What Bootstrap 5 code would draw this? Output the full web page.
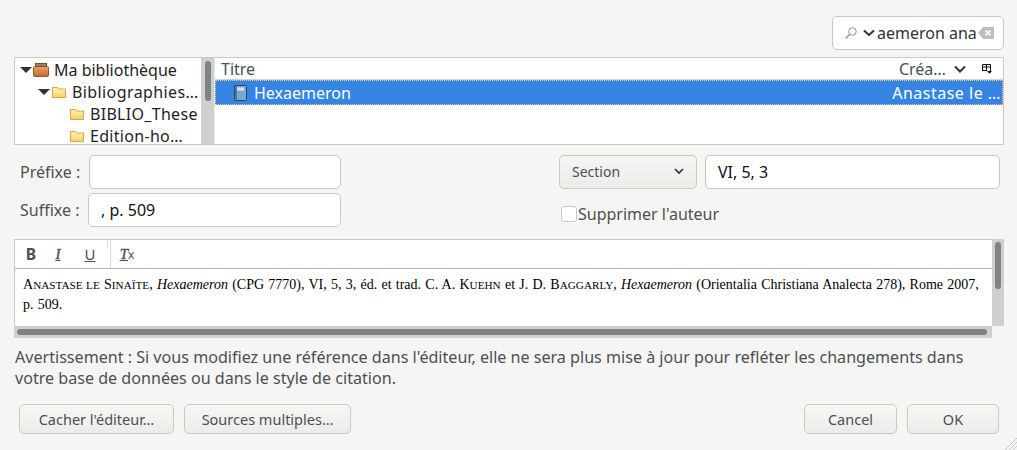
<!DOCTYPE html>
<html lang="fr">
<head>
    <meta charset="UTF-8">
    <meta name="viewport" content="width=device-width, initial-scale=1.0">
    <title>Citation</title>
    <link href="https://cdn.jsdelivr.net/npm/bootstrap@5.3.0/dist/css/bootstrap.min.css" rel="stylesheet">
    <style>
        html, body {
            height: 450px;
            overflow: hidden;
        }
        body {
            background-color: #f6f5f4;
            color: #2e3436;
            font-family: "Noto Sans", sans-serif;
            font-size: 16px;
            position: relative;
        }
        .dlg {
            width: 1017px;
            height: 450px;
            padding: 16px 13px 0 14px;
        }
        .gtk-entry {
            height: 34px;
            background: #fff;
            border: 1px solid #cdc7c2;
            border-radius: 5px;
            padding: 0 12px;
            color: #111;
            line-height: 32px;
            outline: none;
            font: inherit;
            min-width: 0;
        }
        .search-box {
            width: 172px;
            margin-left: auto;
            padding: 0 5px 0 12px;
            color: #2e3436;
        }
        .search-chev {
            margin-left: 6px;
        }
        .search-txt {
            width: 99px;
            flex: none;
            overflow: hidden;
            white-space: nowrap;
            margin-left: 2px;
        }
        .search-clear {
            flex: none;
            margin-left: 2px;
        }
        .panes {
            height: 88px;
            margin-top: 7px;
            border: 1px solid #cdc7c2;
            background: #fff;
            overflow: hidden;
        }
        .tree-pane {
            width: 186px;
            flex: none;
            padding-top: 1px;
        }
        .tree-row {
            height: 22px;
            line-height: 22px;
            white-space: nowrap;
            color: #1f2325;
            gap: 5px;
        }
        .lvl0 { padding-left: 5px; }
        .lvl1 { padding-left: 23px; gap: 6px; letter-spacing: 0.4px; }
        .lvl2 { padding-left: 55px; gap: 6px; letter-spacing: 0.3px; }
        .arrow {
            width: 0;
            height: 0;
            border: 6px solid transparent;
            border-top: 6px solid #2e3436;
            border-bottom: 0;
            display: inline-block;
            margin-right: -4px;
        }
        .v-track {
            width: 14px;
            flex: none;
            background: #cfcfcf;
            border-right: 1px solid #e8e8e8;
            position: relative;
        }
        .v-thumb {
            position: absolute;
            background: #7e8384;
            border-radius: 3px;
            left: 4px;
            top: 3px;
            width: 6px;
            height: 40px;
        }
        .list-pane {
            min-width: 0;
            flex: 1;
        }
        .list-head {
            height: 22px;
            border-bottom: 1px solid #d4d0cc;
            padding: 1px 11px 0 6px;
            line-height: 21px;
            color: #4a5053;
        }
        .list-sel {
            height: 25px;
            background: #3584e4;
            color: #fff;
            line-height: 25px;
            outline: 1px dotted #f0d878;
            outline-offset: -1px;
            padding: 1px 2px 0 19px;
        }
        .sel-name {
            margin-left: 7px;
        }
        .sel-author {
            margin-left: auto;
            letter-spacing: 0.5px;
        }
        .field-lbl {
            color: #4a5053;
            width: 74px;
            flex: none;
            padding-left: 6px;
            white-space: nowrap;
        }
        .lbl-wide {
            width: 75px;
        }
        .fields {
            margin-top: 10px;
        }
        .col-left {
            width: 327px;
            flex: none;
        }
        .col-right {
            margin-left: 218px;
            width: 441px;
            flex: none;
        }
        .sel-btn {
            width: 138px;
            height: 34px;
            flex: none;
            background: linear-gradient(#f6f5f4, #edebe9);
            border: 1px solid #cdc7c2;
            border-radius: 5px;
            font-size: 14px;
            color: #4a5053;
            padding: 0 12px 2px;
        }
        .val-input {
            width: 295px;
        }
        .check-row {
            margin-top: 14px;
            height: 22px;
            color: #4a5053;
        }
        .check-mark {
            width: 16px;
            height: 16px;
            border: 1px solid #cdc7c2;
            border-radius: 3px;
            background: #fff;
            flex: none;
            margin: 0 1px 0 2px;
        }
        .editor-wrap {
            margin-top: 12px;
            height: 99px;
            position: relative;
        }
        .editor-main {
            height: 87px;
            width: 978px;
            background: #fff;
            border: 1px solid #cdc7c2;
            border-right: 0;
            border-bottom: 0;
        }
        .ed-toolbar {
            height: 29px;
            border-bottom: 1px solid #b4b4b4;
            color: #4a5053;
            font-size: 15px;
            position: relative;
        }
        .ed-tool {
            flex: none;
            line-height: 28px;
            text-align: center;
        }
        .tool-b { width: 32px; font-size: 15.5px; }
        .tool-it { width: 22px; }
        .tool-u { width: 42px; }
        .tool-t { width: 32px; }
        .tool-i {
            font-family: "Liberation Serif", serif;
            font-style: italic;
            font-size: 15px;
            text-decoration: underline;
            -webkit-text-stroke: 0.4px #4a5053;
        }
        .tool-sep {
            width: 1px;
            background: #d8d8d8;
            margin: 0 0 0 -1px;
        }
        .tool-tick {
            position: absolute;
            left: 92px;
            top: 0;
            width: 1px;
            height: 7px;
            background: #dcdcdc;
        }
        .tool-x {
            font-family: "Noto Sans", sans-serif;
            font-size: 12px;
            font-style: normal;
            display: inline-block;
            -webkit-text-stroke: 0;
        }
        .ed-text {
            font-family: "Liberation Serif", serif;
            font-size: 14px;
            line-height: 20px;
            color: #000;
            padding: 6px 8px;
            white-space: nowrap;
            word-spacing: 0.75px;
        }
        .sc-low {
            font-size: 0.8em;
            text-transform: uppercase;
        }
        .ed-vtrack {
            position: absolute;
            right: 0;
            top: 0;
            width: 12px;
            height: 87px;
            background: #cfcfcf;
        }
        .ed-vthumb {
            position: absolute;
            left: 3px;
            top: 3px;
            width: 6px;
            height: 47px;
            border-radius: 3px;
            background: #7e8384;
        }
        .ed-htrack {
            height: 12px;
            width: 978px;
            background: #cfcfcf;
            padding: 3px 5px 3px 3px;
        }
        .ed-hthumb {
            height: 6px;
            border-radius: 3px;
            background: #7e8384;
        }
        .warn-txt {
            margin: 9px 0 0 1px;
            line-height: 21px;
            color: #4a5053;
            white-space: nowrap;
            font-size: 16.1px;
        }
        .btn-row {
            margin-top: 15px;
            padding: 0 5px;
        }
        .gtk-btn {
            height: 30px;
            background: linear-gradient(#f8f7f6, #ecebe9);
            border: 1px solid #cdc7c2;
            border-radius: 5px;
            color: #4a5053;
            font-size: 14.5px;
            line-height: 26px;
            padding: 0;
            text-align: center;
        }
        .btn-edit { width: 155px; }
        .btn-multi { width: 167px; margin-left: 10px; }
        .btn-cancel { width: 93px; margin-left: auto; }
        .btn-ok { width: 92px; margin-left: 10px; }
        .grip {
            position: absolute;
            right: 0;
            bottom: 0;
        }
    </style>
</head>
<body>
<div class="dlg d-flex flex-column">
    <div class="gtk-entry search-box d-flex align-items-center">
        <svg width="12" height="12" viewBox="0 0 12 12" fill="none" stroke="#8d8f8f"><circle cx="7.500" cy="4.500" r="3.800"/><path d="M4.800 7.200 .7 11.300" stroke-width="1.300"/></svg>
        <svg class="search-chev" width="12" height="8" viewBox="0 0 12 8" fill="none" stroke="#2e3436" stroke-width="2"><path d="M1 1.500 6 6l5-4.500"/></svg>
        <span class="search-txt">aemeron ana</span>
        <svg class="search-clear" width="16" height="12" viewBox="0 0 16 12"><path d="M0 6 5 0h11v12H5z" fill="#bcbfb9"/><path d="M7.500 3.500l5 5m0-5-5 5" stroke="#f4f4f2" stroke-width="2"/></svg>
    </div>

    <div class="panes d-flex">
        <div class="tree-pane">
            <div class="tree-row lvl0 d-flex align-items-center">
                <span class="arrow"></span>
                <svg width="16" height="14" viewBox="0 0 16 14"><defs><linearGradient id="box" x1="0" y1="0" x2="0" y2="1"><stop offset="0" stop-color="#e9a468"/><stop offset="1" stop-color="#c9682c"/></linearGradient></defs><rect x="0.500" y="3.500" width="15" height="10" rx="1" fill="url(#box)" stroke="#8f5a2c"/><rect x="2.500" y="0.500" width="11" height="3" fill="#a97d52" stroke="#6e5236"/></svg>
                <span>Ma bibliothèque</span>
            </div>
            <div class="tree-row lvl1 d-flex align-items-center">
                <span class="arrow"></span>
                <svg width="14" height="12" viewBox="0 0 14 12"><defs><linearGradient id="fol" x1="0" y1="0" x2="0" y2="1"><stop offset="0" stop-color="#fdf3c4"/><stop offset="1" stop-color="#f8d25e"/></linearGradient></defs><path d="M.5 1.500h5l1 1.500h7v8.500H.5z" fill="url(#fol)" stroke="#e0a040"/></svg>
                <span>Bibliographies…</span>
            </div>
            <div class="tree-row lvl2 d-flex align-items-center">
                <svg width="14" height="12" viewBox="0 0 14 12"><path d="M.5 1.500h5l1 1.500h7v8.500H.5z" fill="url(#fol)" stroke="#e0a040"/></svg>
                <span>BIBLIO_These</span>
            </div>
            <div class="tree-row lvl2 d-flex align-items-center">
                <svg width="14" height="12" viewBox="0 0 14 12"><path d="M.5 1.500h5l1 1.500h7v8.500H.5z" fill="url(#fol)" stroke="#e0a040"/></svg>
                <span>Edition-ho…</span>
            </div>
        </div>
        <div class="v-track"><div class="v-thumb"></div></div>
        <div class="list-pane">
            <div class="list-head d-flex align-items-center">
                <span>Titre</span>
                <span class="ms-auto">Créa…</span>
                <svg class="ms-2" width="12" height="8" viewBox="0 0 12 8" fill="none" stroke="#2e3436" stroke-width="2"><path d="M1 1.500 6 6.500l5-5"/></svg>
                <svg class="ms-3" width="10" height="10" viewBox="0 0 10 10" fill="none" stroke="#111"><path d="M.5 7V.5h8V7M.5 3h8M4.500 1v6M.5 6.500H4"/><path d="M5 7h5L7.500 9.800z" fill="#111" stroke="none"/></svg>
            </div>
            <div class="list-sel d-flex align-items-center">
                <svg width="13" height="16" viewBox="0 0 13 16"><rect x="0.500" y="0.500" width="12" height="15" rx="1" fill="#7fa6cd" stroke="#25486c"/><rect x="3" y="2.500" width="7" height="3" fill="#d6e4f1"/><path d="M2 1v14" stroke="#25486c"/></svg>
                <span class="sel-name">Hexaemeron</span>
                <span class="sel-author">Anastase le …</span>
            </div>
        </div>
    </div>

    <div class="fields d-flex">
        <div class="col-left d-flex flex-column gap-1">
            <div class="d-flex align-items-center">
                <span class="field-lbl lbl-wide">Préfixe :</span>
                <input class="gtk-entry flex-fill" type="text" value="">
            </div>
            <div class="d-flex align-items-center">
                <span class="field-lbl">Suffixe :</span>
                <input class="gtk-entry flex-fill" type="text" value=", p. 509">
            </div>
        </div>
        <div class="col-right">
            <div class="d-flex gap-2">
                <div class="sel-btn d-flex align-items-center justify-content-between">
                    <span>Section</span>
                    <svg width="10" height="7" viewBox="0 0 10 7" fill="none" stroke="#2e3436" stroke-width="1.600"><path d="M1 1l4 4 4-4"/></svg>
                </div>
                <input class="gtk-entry val-input" type="text" value="VI, 5, 3">
            </div>
            <div class="check-row d-flex align-items-center">
                <span class="check-mark"></span>
                <span>Supprimer l'auteur</span>
            </div>
        </div>
    </div>

    <div class="editor-wrap">
        <div class="editor-main">
            <div class="ed-toolbar d-flex">
                <span class="tool-tick"></span>
                <span class="ed-tool tool-b fw-bold">B</span>
                <span class="ed-tool tool-it tool-i">I</span>
                <span class="ed-tool tool-u text-decoration-underline">U</span>
                <span class="tool-sep"></span>
                <span class="ed-tool tool-t tool-i">T<span class="tool-x">x</span></span>
            </div>
            <div class="ed-text">
                A<span class="sc-low">nastase le</span> S<span class="sc-low">inaïte</span>, <i>Hexaemeron</i> (CPG 7770), VI, 5, 3, éd. et trad. C. A. K<span class="sc-low">uehn</span> et J. D. B<span class="sc-low">aggarly</span>, <i>Hexaemeron</i> (Orientalia Christiana Analecta 278), Rome 2007,<br>p. 509.
            </div>
        </div>
        <div class="ed-vtrack"><div class="ed-vthumb"></div></div>
        <div class="ed-htrack"><div class="ed-hthumb"></div></div>
    </div>

    <p class="warn-txt">Avertissement : Si vous modifiez une référence dans l'éditeur, elle ne sera plus mise à jour pour refléter les changements dans<br>votre base de données ou dans le style de citation.</p>

    <div class="btn-row d-flex">
        <button class="gtk-btn btn-edit">Cacher l'éditeur…</button>
        <button class="gtk-btn btn-multi">Sources multiples…</button>
        <button class="gtk-btn btn-cancel">Cancel</button>
        <button class="gtk-btn btn-ok">OK</button>
    </div>
</div>
<svg class="grip" width="14" height="14" viewBox="0 0 14 14" stroke="#c8c6c3"><path d="M14 2 2 14M14 6 6 14M14 10l-4 4"/></svg>
</body>
</html>
